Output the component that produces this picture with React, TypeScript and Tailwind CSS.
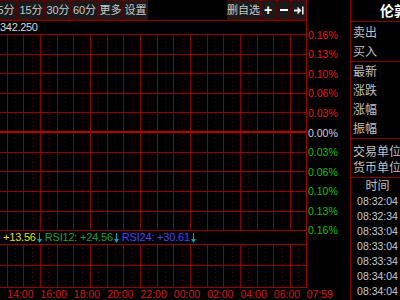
import React from "react";

const VX = Array.from({ length: 18 }, (_, k) => Math.round(6.67 + 16.667 * k));
const MX = Array.from({ length: 19 }, (_, k) => Math.round(-1.67 + 16.667 * k)).filter((x) => x > 0 && x < 306);

function Grid({ h, lines, zero }: { h: number; lines: number[]; zero?: number }) {
  return (
    <svg width={306} height={h} className="block" shapeRendering="crispEdges">
      {MX.map((x) => (
        <line key={"m" + x} x1={x + 0.5} x2={x + 0.5} y1={0} y2={h} stroke="#5a0000" strokeDasharray="1 3" />
      ))}
      {VX.map((x) => (
        <line key={"v" + x} x1={x + 0.5} x2={x + 0.5} y1={0} y2={h} stroke="#8a0000" />
      ))}
      {lines.map((y) => (
        <line key={"h" + y} x1={0} x2={306} y1={y + 0.5} y2={y + 0.5} stroke="#980000" />
      ))}
      {zero !== undefined && <rect x={0} y={zero} width={306} height={2} fill="#b80000" />}
    </svg>
  );
}

function DownArrow() {
  return (
    <svg width={5} height={10} viewBox="0 0 5 10" className="block">
      <line x1={2.5} y1={0} x2={2.5} y2={7} stroke="#00a8b0" strokeWidth={1} />
      <path d="M0 6 L5 6 L2.5 10 Z" fill="#00a8b0" />
    </svg>
  );
}

function Btn({ children, w, extra = "" }: { children: React.ReactNode; w: string; extra?: string }) {
  return (
    <div
      className={`${w} ${extra} h-[20px] shrink-0 border border-[#5a0000] bg-[#1a1a1a] flex items-center justify-center text-[11px] text-[#c8c8c8] whitespace-nowrap`}
    >
      {children}
    </div>
  );
}

const pct = [
  { t: "0.16%", c: "text-[#e81818]" },
  { t: "0.13%", c: "text-[#e81818]" },
  { t: "0.10%", c: "text-[#e81818]" },
  { t: "0.06%", c: "text-[#e81818]" },
  { t: "0.03%", c: "text-[#e81818]" },
  { t: "0.00%", c: "text-[#d0d0dc]" },
  { t: "0.03%", c: "text-[#10c010]" },
  { t: "0.06%", c: "text-[#10c010]" },
  { t: "0.10%", c: "text-[#10c010]" },
  { t: "0.13%", c: "text-[#10c010]" },
  { t: "0.16%", c: "text-[#10c010]" },
];

const times = ["14:00", "16:00", "18:00", "20:00", "22:00", "00:00", "02:00", "04:00", "06:00"];
const clock = ["08:32:04", "08:32:34", "08:33:04", "08:33:04", "08:33:34", "08:34:04", "08:34:04"];

export default function App() {
  return (
    <div className="w-[400px] h-[300px] bg-black flex overflow-hidden font-['Liberation_Sans','Noto_Sans_CJK_SC',sans-serif]">
      {/* left */}
      <div className="w-[350px] shrink-0 flex flex-col">
        <div className="flex h-[288px]">
          <div className="w-[307px] shrink-0 border-r border-[#a00000] flex flex-col">
            {/* toolbar */}
            <div className="h-[21px] border-b border-[#8a0000] flex items-start">
              <Btn w="w-[22px]" extra="ml-[-5px]">5分</Btn>
              <Btn w="w-[28px]">15分</Btn>
              <Btn w="w-[26px]">30分</Btn>
              <Btn w="w-[27px]">60分</Btn>
              <Btn w="w-[25px]">更多</Btn>
              <Btn w="w-[25px]">设置</Btn>
              <div className="flex-1" />
              <Btn w="w-[33px]">删自选</Btn>
              <Btn w="w-[16px]">
                <span className="text-white text-[14px] font-bold leading-none">+</span>
              </Btn>
              <Btn w="w-[15px]">
                <span className="block w-[8px] h-[2px] bg-white" />
              </Btn>
              <Btn w="w-[15px]">
                <svg width={10} height={9} viewBox="0 0 10 9">
                  <rect x={0} y={3.5} width={4} height={2} fill="#e8e8e8" />
                  <path d="M3.5 0.5 L7.5 4.5 L3.5 8.5 Z" fill="#e8e8e8" />
                  <rect x={8} y={0.5} width={1.6} height={8} fill="#e8e8e8" />
                </svg>
              </Btn>
            </div>
            {/* price */}
            <div className="h-[13px] flex items-center text-[11px] text-[#d8d8d8] leading-none tracking-[-0.3px]">
              342.250
            </div>
            <Grid h={197} lines={[0, 20, 39, 59, 78, 118, 137, 157, 177, 196]} zero={97} />
            {/* rsi band */}
            <div className="h-[13px] flex items-center pl-[3px] text-[11px] leading-none whitespace-nowrap tracking-[-0.2px]">
              <span className="text-[#e0e000]">+13.56</span>
              <span className="ml-[1px]">
                <DownArrow />
              </span>
              <span className="ml-[3px] text-[#18a040]">RSI12: +24.56</span>
              <span className="ml-[1px]">
                <DownArrow />
              </span>
              <span className="ml-[3px] text-[#4646ff]">RSI24: +30.61</span>
              <span className="ml-[1px]">
                <DownArrow />
              </span>
            </div>
            <Grid h={44} lines={[0, 21, 43]} />
          </div>
          {/* percent labels */}
          <div className="w-[43px] flex flex-col pt-[25px] pl-[1px] text-[10.5px] leading-none">
            {pct.map((p, i) => (
              <div key={i} className={`h-[19.6px] flex items-center ${p.c}`}>
                {p.t}
              </div>
            ))}
          </div>
        </div>
        {/* time labels */}
        <div className="h-[12px] flex items-center pl-[3.7px] text-[10.5px] text-[#d81818] leading-none whitespace-nowrap">
          {times.map((t) => (
            <div key={t} className="w-[33.33px] shrink-0 text-center">
              {t}
            </div>
          ))}
          <div className="ml-[3px]">07:59</div>
        </div>
      </div>
      {/* right panel */}
      <div className="w-[50px] shrink-0 border-l border-[#8a0000] flex flex-col text-[12px] text-[#c0c0c0] leading-none">
        <div className="h-[22px] border-b border-[#8a0000] pl-[29px] flex items-center whitespace-nowrap overflow-hidden">
          <span className="text-white text-[14px] font-bold">伦敦金</span>
        </div>
        <div className="h-[40px] border-b border-[#8a0000] pt-[2px] pl-[2px] flex flex-col">
          <div className="h-[19px] flex items-center">卖出</div>
          <div className="h-[19px] flex items-center">买入</div>
        </div>
        <div className="h-[77px] border-b border-[#8a0000] pl-[2px] flex flex-col">
          <div className="h-[19px] flex items-center">最新</div>
          <div className="h-[19px] flex items-center">涨跌</div>
          <div className="h-[19px] flex items-center">涨幅</div>
          <div className="h-[19px] flex items-center">振幅</div>
        </div>
        <div className="h-[39px] border-b border-[#8a0000] pt-[5px] pl-[2px] flex flex-col whitespace-nowrap">
          <div className="h-[16px] flex items-center">交易单位</div>
          <div className="h-[16px] flex items-center">货币单位</div>
        </div>
        <div className="flex flex-col pl-[4px]">
          <div className="h-[16px] flex items-center justify-center">时间</div>
          {clock.map((c, i) => (
            <div key={i} className="h-[15px] flex items-center justify-center text-[10.5px] text-[#c8ccd4]">
              {c}
            </div>
          ))}
        </div>
      </div>
    </div>
  );
}
